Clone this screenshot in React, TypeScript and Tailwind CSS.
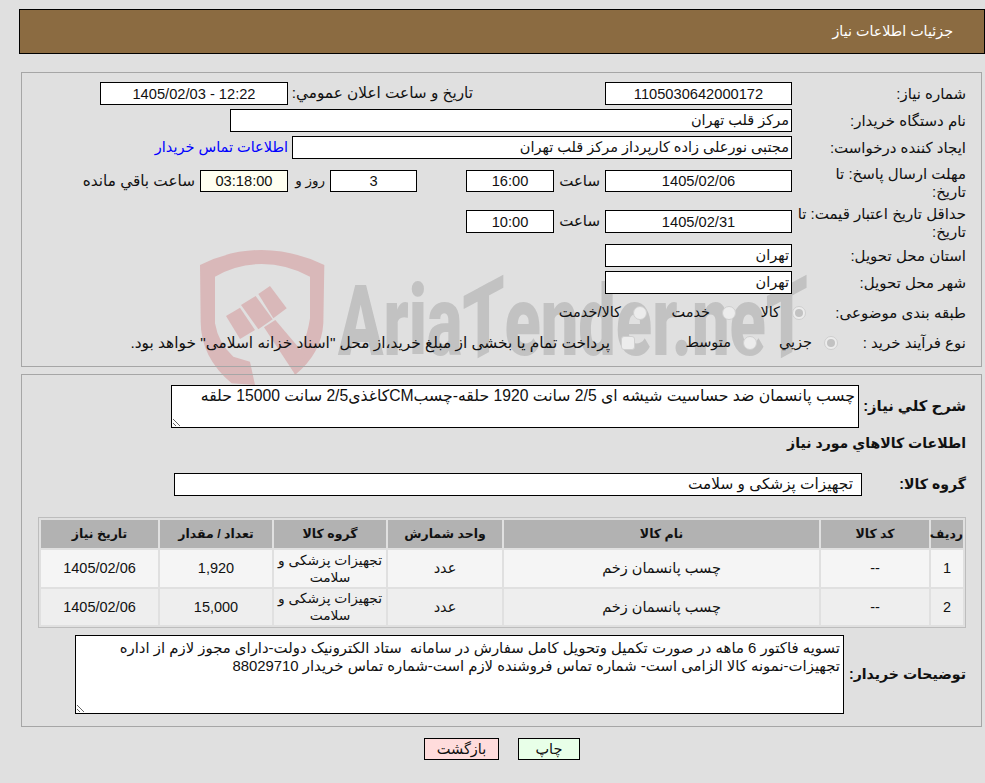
const font = "font-['Liberation_Sans','DejaVu_Sans',sans-serif]"

function Box({ w, h = "h-[23px]", children, left, bg = "bg-white" }: { w: string; h?: string; children?: React.ReactNode; left?: boolean; bg?: string }) {
  return (
    <div className={`${w} ${h} ${bg} relative shrink-0 border border-black flex items-center ${left ? "justify-start pr-[2px]" : "justify-center text-[14.67px]"}`}>
      {children}
    </div>
  )
}

function Label({ w = "w-[174px]", children }: { w?: string; children: React.ReactNode }) {
  return <div className={`${w} shrink-0 pl-[3px] leading-[18px] text-[15px]`}>{children}</div>
}

function Radio({ on, square }: { on?: boolean; square?: boolean }) {
  return (
    <span
      className={`w-[14px] h-[14px] shrink-0 flex items-center justify-center border border-[#cfcfcf] bg-[#ececec] ${square ? "rounded-[3px]" : "rounded-full"}`}
    >
      {on && <span className="w-[8px] h-[8px] rounded-full bg-[#c2c2c2]" />}
    </span>
  )
}

function Watermark() {
  return (
    <div className="absolute left-0 top-0 w-full h-full overflow-hidden pointer-events-none" dir="ltr">
      <svg className="absolute left-[190px] top-[240px]" width="150" height="150" viewBox="0 0 450 450" fill="#d9b8b9">
        <path d="M30 75 Q120 30 215 30 Q310 30 403 75 L400 250 Q395 340 315 405 L298 372 Q345 330 360 235 L360 110 Q290 72 215 72 Q140 72 75 110 L75 250 Q85 310 130 350 L180 365 L195 435 L125 430 Q30 350 32 240 Z" />
        <path d="M108 228 L150 203 L195 270 L150 297 Z" />
        <path d="M153 195 L197 168 L248 238 L205 268 Z" />
        <path d="M205 162 L240 138 L290 205 L250 235 Z" />
        <path d="M222 262 L256 240 L345 345 L310 395 Z" />
      </svg>
      <span className="absolute left-[338px] top-[262px] origin-top-left scale-x-[0.68] text-[98px] leading-[120px] font-black whitespace-nowrap text-[#c2c2c2] font-['Roboto',sans-serif]">
        Aria<span className="inline-block -skew-y-[20deg]">T</span>ender.ne<span className="inline-block -skew-y-[20deg]">T</span>
      </span>
    </div>
  )
}

export default function App() {
  return (
    <div className={`relative min-h-screen bg-[#e0e0e0] text-[14.5px] text-[#111] ${font}`} dir="rtl">
      <Watermark />
      <div className="relative ml-[19px] w-[966px] pt-[9px]">
        <div className="h-[45px] bg-[#8b6b41] border border-black flex items-center pr-[31px] text-white text-[14.3px]">
          جزئيات اطلاعات نياز
        </div>

        {/* main info */}
        <div className="mt-[18px] mr-[3px] ml-[2px] h-[295px] border border-[#a6a6a6] pt-[9px] pr-[15px]">
          <div className="flex items-center h-[23px]">
            <Label>شماره نياز:</Label>
            <Box w="w-[187px]">1105030642000172</Box>
            <div className="mr-[132px] w-[185px] shrink-0 text-[15.3px]">تاريخ و ساعت اعلان عمومي:</div>
            <Box w="w-[188px]"><span dir="ltr">1405/02/03 - 12:22</span></Box>
          </div>
          <div className="flex items-center h-[23px] mt-[4px]">
            <Label>نام دستگاه خريدار:</Label>
            <Box w="w-[562px]" left>مرکز قلب تهران</Box>
          </div>
          <div className="flex items-center h-[23px] mt-[4px]">
            <Label>ايجاد کننده درخواست:</Label>
            <Box w="w-[500px]" left>مجتبی نورعلی زاده کارپرداز مرکز قلب تهران</Box>
            <a className="mr-[4px] text-[#0000ff]">اطلاعات تماس خريدار</a>
          </div>
          <div className="flex items-center h-[22px] mt-[11px]">
            <Label><div className="pt-[3px]">مهلت ارسال پاسخ: تا<br />تاريخ:</div></Label>
            <Box w="w-[187px]" h="h-[22px]">1405/02/06</Box>
            <div className="w-[51px] shrink-0 pr-[5px] text-[15px]">ساعت</div>
            <Box w="w-[88px]" h="h-[22px]">16:00</Box>
            <div className="w-[49px] shrink-0" />
            <Box w="w-[87px]" h="h-[22px]">3</Box>
            <div className="w-[42px] shrink-0 pr-[5px] text-[13.5px]">روز و</div>
            <Box w="w-[88px]" h="h-[22px]" bg="bg-[#fffff0]">03:18:00</Box>
            <div className="pr-[5px] whitespace-nowrap text-[15.3px]">ساعت باقي مانده</div>
          </div>
          <div className="flex items-center h-[23px] mt-[18px]">
            <Label><div className="pt-[2px]">حداقل تاريخ اعتبار قيمت: تا<br />تاريخ:</div></Label>
            <Box w="w-[187px]">1405/02/31</Box>
            <div className="w-[51px] shrink-0 pr-[5px] text-[15px]">ساعت</div>
            <Box w="w-[88px]">10:00</Box>
          </div>
          <div className="flex items-center h-[23px] mt-[11px]">
            <Label>استان محل تحويل:</Label>
            <Box w="w-[187px]" left>تهران</Box>
          </div>
          <div className="flex items-center h-[23px] mt-[4px]">
            <Label>شهر محل تحويل:</Label>
            <Box w="w-[187px]" left>تهران</Box>
          </div>
          <div className="flex items-center h-[30px] mt-[4px]">
            <Label w="w-[160px]">طبقه بندی موضوعی:</Label>
            <div className="flex items-center w-[70px] shrink-0 gap-[12px]"><Radio on /><span>کالا</span></div>
            <div className="flex items-center w-[89px] shrink-0 gap-[12px]"><Radio /><span>خدمت</span></div>
            <div className="flex items-center gap-[12px]"><Radio /><span>کالا/خدمت</span></div>
          </div>
          <div className="flex items-center h-[30px]">
            <Label w="w-[128px]">نوع فرآيند خريد :</Label>
            <div className="flex items-center w-[81px] shrink-0 gap-[12px]"><Radio on /><span>جزيي</span></div>
            <div className="flex items-center w-[122px] shrink-0 gap-[12px]"><Radio /><span>متوسط</span></div>
            <div className="flex items-center gap-[11px] whitespace-nowrap text-[15.4px]"><Radio square /><span>پرداخت تمام يا بخشی از مبلغ خريد،از محل "اسناد خزانه اسلامی" خواهد بود.</span></div>
          </div>
        </div>

        {/* goods */}
        <div className="mt-[7px] mr-[3px] ml-[2px] h-[353px] border border-[#a6a6a6] pt-[10px] pr-[15px]">
          <div className="flex items-start h-[43px]">
            <div className="w-[107px] shrink-0 self-center font-bold text-[14.8px]">شرح کلي نياز:</div>
            <textarea
              readOnly
              className={`w-[688px] h-[43px] bg-white border border-black px-[3px] py-0 text-[15.7px] leading-[20px] outline-none ${font}`}
              defaultValue="چسب پانسمان ضد حساسيت شيشه ای 2/5 سانت 1920 حلقه-چسبCMکاغذی2/5 سانت 15000 حلقه"
            />
          </div>
          <div className="mt-[5px] h-[20px] leading-[20px] font-bold text-[14.1px]">اطلاعات کالاهاي مورد نياز</div>
          <div className="flex items-center h-[23px] mt-[20px]">
            <div className="w-[104px] shrink-0 font-bold text-[14.1px]">گروه کالا:</div>
            <Box w="w-[688px]" left><span className="pr-[6px] text-[15.3px]">تجهيزات پزشکی و سلامت</span></Box>
          </div>
          <table className="mt-[21px] w-[928px] table-fixed border-separate border-spacing-[2px] border border-[#bdbdbd] text-center">
            <thead>
              <tr className="bg-[#b2b2b2] h-[28px] text-[12.5px]">
                <th className="w-[32px] font-bold">رديف</th>
                <th className="w-[108px] font-bold">کد کالا</th>
                <th className="w-[315px] font-bold">نام کالا</th>
                <th className="w-[114px] font-bold">واحد شمارش</th>
                <th className="w-[112px] font-bold">گروه کالا</th>
                <th className="w-[112px] font-bold">تعداد / مقدار</th>
                <th className="font-bold">تاريخ نياز</th>
              </tr>
            </thead>
            <tbody className="leading-[17px]">
              <tr className="bg-[#f5f5f5] h-[37px]">
                <td>1</td>
                <td>--</td>
                <td>چسب پانسمان زخم</td>
                <td>عدد</td>
                <td className="text-[13.8px]">تجهيزات پزشکی و سلامت</td>
                <td>1,920</td>
                <td>1405/02/06</td>
              </tr>
              <tr className="bg-[#eeeeee] h-[36px]">
                <td>2</td>
                <td>--</td>
                <td>چسب پانسمان زخم</td>
                <td>عدد</td>
                <td className="text-[13.8px]">تجهيزات پزشکی و سلامت</td>
                <td>15,000</td>
                <td>1405/02/06</td>
              </tr>
            </tbody>
          </table>
          <div className="flex items-center mt-[7px] h-[79px]">
            <div className="w-[122px] shrink-0 font-bold text-[14.1px] whitespace-nowrap">توضيحات خريدار:</div>
            <textarea
              readOnly
              className={`w-[769px] h-[79px] bg-white border border-black px-[3px] pt-[3px] pb-0 text-[14.9px] leading-[18px] outline-none ${font}`}
              defaultValue={"تسويه فاکتور 6 ماهه در صورت تکميل وتحويل کامل سفارش در سامانه  ستاد الکترونيک دولت-دارای مجوز لازم از اداره\nتجهيزات-نمونه کالا الزامی است- شماره تماس فروشنده لازم است-شماره تماس خريدار 88029710"}
            />
          </div>
        </div>

        <div className="mt-[11px] flex justify-center gap-[19px]">
          <button className="w-[62px] h-[22px] bg-[#e8ffe8] border border-black">چاپ</button>
          <button className="w-[75px] h-[22px] bg-[#ffdcdc] border border-black">بازگشت</button>
        </div>
      </div>
    </div>
  )
}
